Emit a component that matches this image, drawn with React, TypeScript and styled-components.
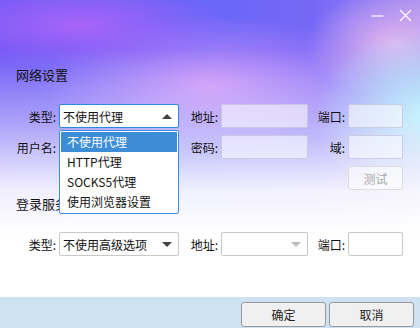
import styled, { createGlobalStyle } from 'styled-components';

const GlobalStyle = createGlobalStyle`
  html, body {
    margin: 0;
    padding: 0;
    background: #fff;
  }
  body {
    font-family: "Noto Sans CJK SC", "Noto Sans", sans-serif;
    font-size: 12px;
    color: #111;
  }
`;

const Window = styled.div`
  position: relative;
  width: 420px;
  height: 328px;
  display: flex;
  flex-direction: column;
  overflow: hidden;
  background:
    linear-gradient(180deg, rgba(255,255,255,0) 50px, rgba(255,255,255,0.45) 125px, rgba(255,255,255,0.9) 190px, #fff 235px),
    radial-gradient(ellipse 110px 90px at 425px 115px, #9fecfb, rgba(159,236,251,0) 100%),
    radial-gradient(ellipse 90px 55px at 395px 45px, #e4b4ee, rgba(228,180,238,0) 100%),
    radial-gradient(ellipse 150px 45px at 80px 25px, #a864f8, rgba(168,100,248,0) 100%),
    radial-gradient(ellipse 170px 70px at 210px 85px, #c88ef8, rgba(200,142,248,0) 100%),
    linear-gradient(90deg, #6e58f6 0%, #6666f8 45%, #7668f6 75%, #a690f0 100%);
`;

const TitleBar = styled.div`
  height: 30px;
  display: flex;
  justify-content: flex-end;
  align-items: center;
  gap: 14px;
  padding-right: 8px;
`;

const WinButton = styled.button`
  width: 14px;
  height: 14px;
  padding: 0;
  border: 0;
  background: none;
  display: flex;
  align-items: center;
  justify-content: center;
`;

const Content = styled.div`
  flex: 1;
  position: relative;
`;

const SectionTitle = styled.div`
  margin: 36px 0 0 16px;
  height: 18px;
  line-height: 18px;
  font-size: 13px;
  color: #111;
`;

const FormGrid = styled.div<{ $top: number }>`
  display: grid;
  grid-template-columns: 59px 120px 42px 87px 40px 55px;
  grid-auto-rows: 24px;
  row-gap: 7px;
  margin-top: ${({ $top }) => $top}px;
`;

const Label = styled.label`
  display: flex;
  align-items: center;
  justify-content: flex-end;
  padding-right: 3px;
  white-space: nowrap;
  color: #111;
`;

const Input = styled.div<{ $solid?: boolean }>`
  box-sizing: border-box;
  height: 24px;
  border: 1px solid ${({ $solid }) => ($solid ? '#c8c8c8' : 'rgba(190,190,215,0.7)')};
  border-radius: 2px;
  background: ${({ $solid }) => ($solid ? '#fff' : 'rgba(255,255,255,0.55)')};
`;

const Combo = styled.div<{ $focused?: boolean }>`
  box-sizing: border-box;
  height: 24px;
  display: flex;
  align-items: center;
  justify-content: space-between;
  padding: 0 6px 0 3px;
  border: 1px solid ${({ $focused }) => ($focused ? '#2b8ae6' : '#c8c8c8')};
  border-radius: 2px;
  background: #fff;
  color: #111;
`;

const Arrow = styled.span<{ $up?: boolean; $disabled?: boolean }>`
  width: 0;
  height: 0;
  border-left: 5px solid transparent;
  border-right: 5px solid transparent;
  ${({ $up, $disabled }) =>
    $up
      ? `border-bottom: 5px solid ${$disabled ? '#bbb' : '#444'};`
      : `border-top: 5px solid ${$disabled ? '#bbb' : '#444'};`}
`;

const TestButton = styled.button`
  box-sizing: border-box;
  height: 24px;
  padding: 0;
  border: 1px solid #dcdcdc;
  border-radius: 3px;
  background: rgba(255,255,255,0.6);
  color: #a8a8a8;
  font: inherit;
`;

const SubTitle = styled.div`
  margin: 5px 0 0 16px;
  height: 18px;
  line-height: 18px;
  font-size: 13px;
`;

const DropList = styled.ul`
  position: absolute;
  left: 59px;
  top: 100px;
  width: 120px;
  box-sizing: border-box;
  margin: 0;
  padding: 1px;
  list-style: none;
  background: #fff;
  border: 1px solid #3a8ee6;
  border-radius: 2px;
`;

const DropItem = styled.li<{ $selected?: boolean }>`
  height: 20px;
  line-height: 20px;
  padding-left: 6px;
  background: ${({ $selected }) => ($selected ? '#3c8dd6' : 'transparent')};
  color: ${({ $selected }) => ($selected ? '#fff' : '#111')};
  white-space: nowrap;
`;

const Footer = styled.div`
  height: 31px;
  background: #cfe2f3;
  display: flex;
  justify-content: flex-end;
  align-items: flex-start;
  gap: 3px;
  padding: 5px 6px 0 0;
  box-sizing: border-box;
`;

const FooterButton = styled.button`
  width: 85px;
  height: 25px;
  padding: 0;
  border: 1px solid #9a9a9a;
  border-radius: 3px;
  background: #f0f0f0;
  color: #222;
  font: inherit;
`;

const proxyOptions = ['不使用代理', 'HTTP代理', 'SOCKS5代理', '使用浏览器设置'];

export default function App() {
  return (
    <>
      <GlobalStyle />
      <Window>
        <TitleBar>
          <WinButton aria-label="最小化">
            <svg width="13" height="13" viewBox="0 0 13 13">
              <line x1="0.5" y1="7" x2="12.5" y2="7" stroke="#fff" strokeWidth="1.2" />
            </svg>
          </WinButton>
          <WinButton aria-label="关闭">
            <svg width="13" height="13" viewBox="0 0 13 13">
              <path d="M1 1 L12 12 M12 1 L1 12" stroke="#fff" strokeWidth="1.1" />
            </svg>
          </WinButton>
        </TitleBar>
        <Content>
          <SectionTitle>网络设置</SectionTitle>
          <FormGrid $top={20}>
            <Label>类型:</Label>
            <Combo $focused>
              <span>不使用代理</span>
              <Arrow $up />
            </Combo>
            <Label>地址:</Label>
            <Input />
            <Label>端口:</Label>
            <Input />

            <Label>用户名:</Label>
            <div />
            <Label>密码:</Label>
            <Input />
            <Label>域:</Label>
            <Input />

            <div />
            <div />
            <div />
            <div />
            <div />
            <TestButton disabled>测试</TestButton>
          </FormGrid>
          <SubTitle>登录服务器</SubTitle>
          <FormGrid $top={19}>
            <Label>类型:</Label>
            <Combo>
              <span>不使用高级选项</span>
              <Arrow />
            </Combo>
            <Label>地址:</Label>
            <Combo>
              <span />
              <Arrow $disabled />
            </Combo>
            <Label>端口:</Label>
            <Input $solid />
          </FormGrid>
          <DropList>
            {proxyOptions.map((o, i) => (
              <DropItem key={o} $selected={i === 0}>
                {o}
              </DropItem>
            ))}
          </DropList>
        </Content>
        <Footer>
          <FooterButton>确定</FooterButton>
          <FooterButton>取消</FooterButton>
        </Footer>
      </Window>
    </>
  );
}
